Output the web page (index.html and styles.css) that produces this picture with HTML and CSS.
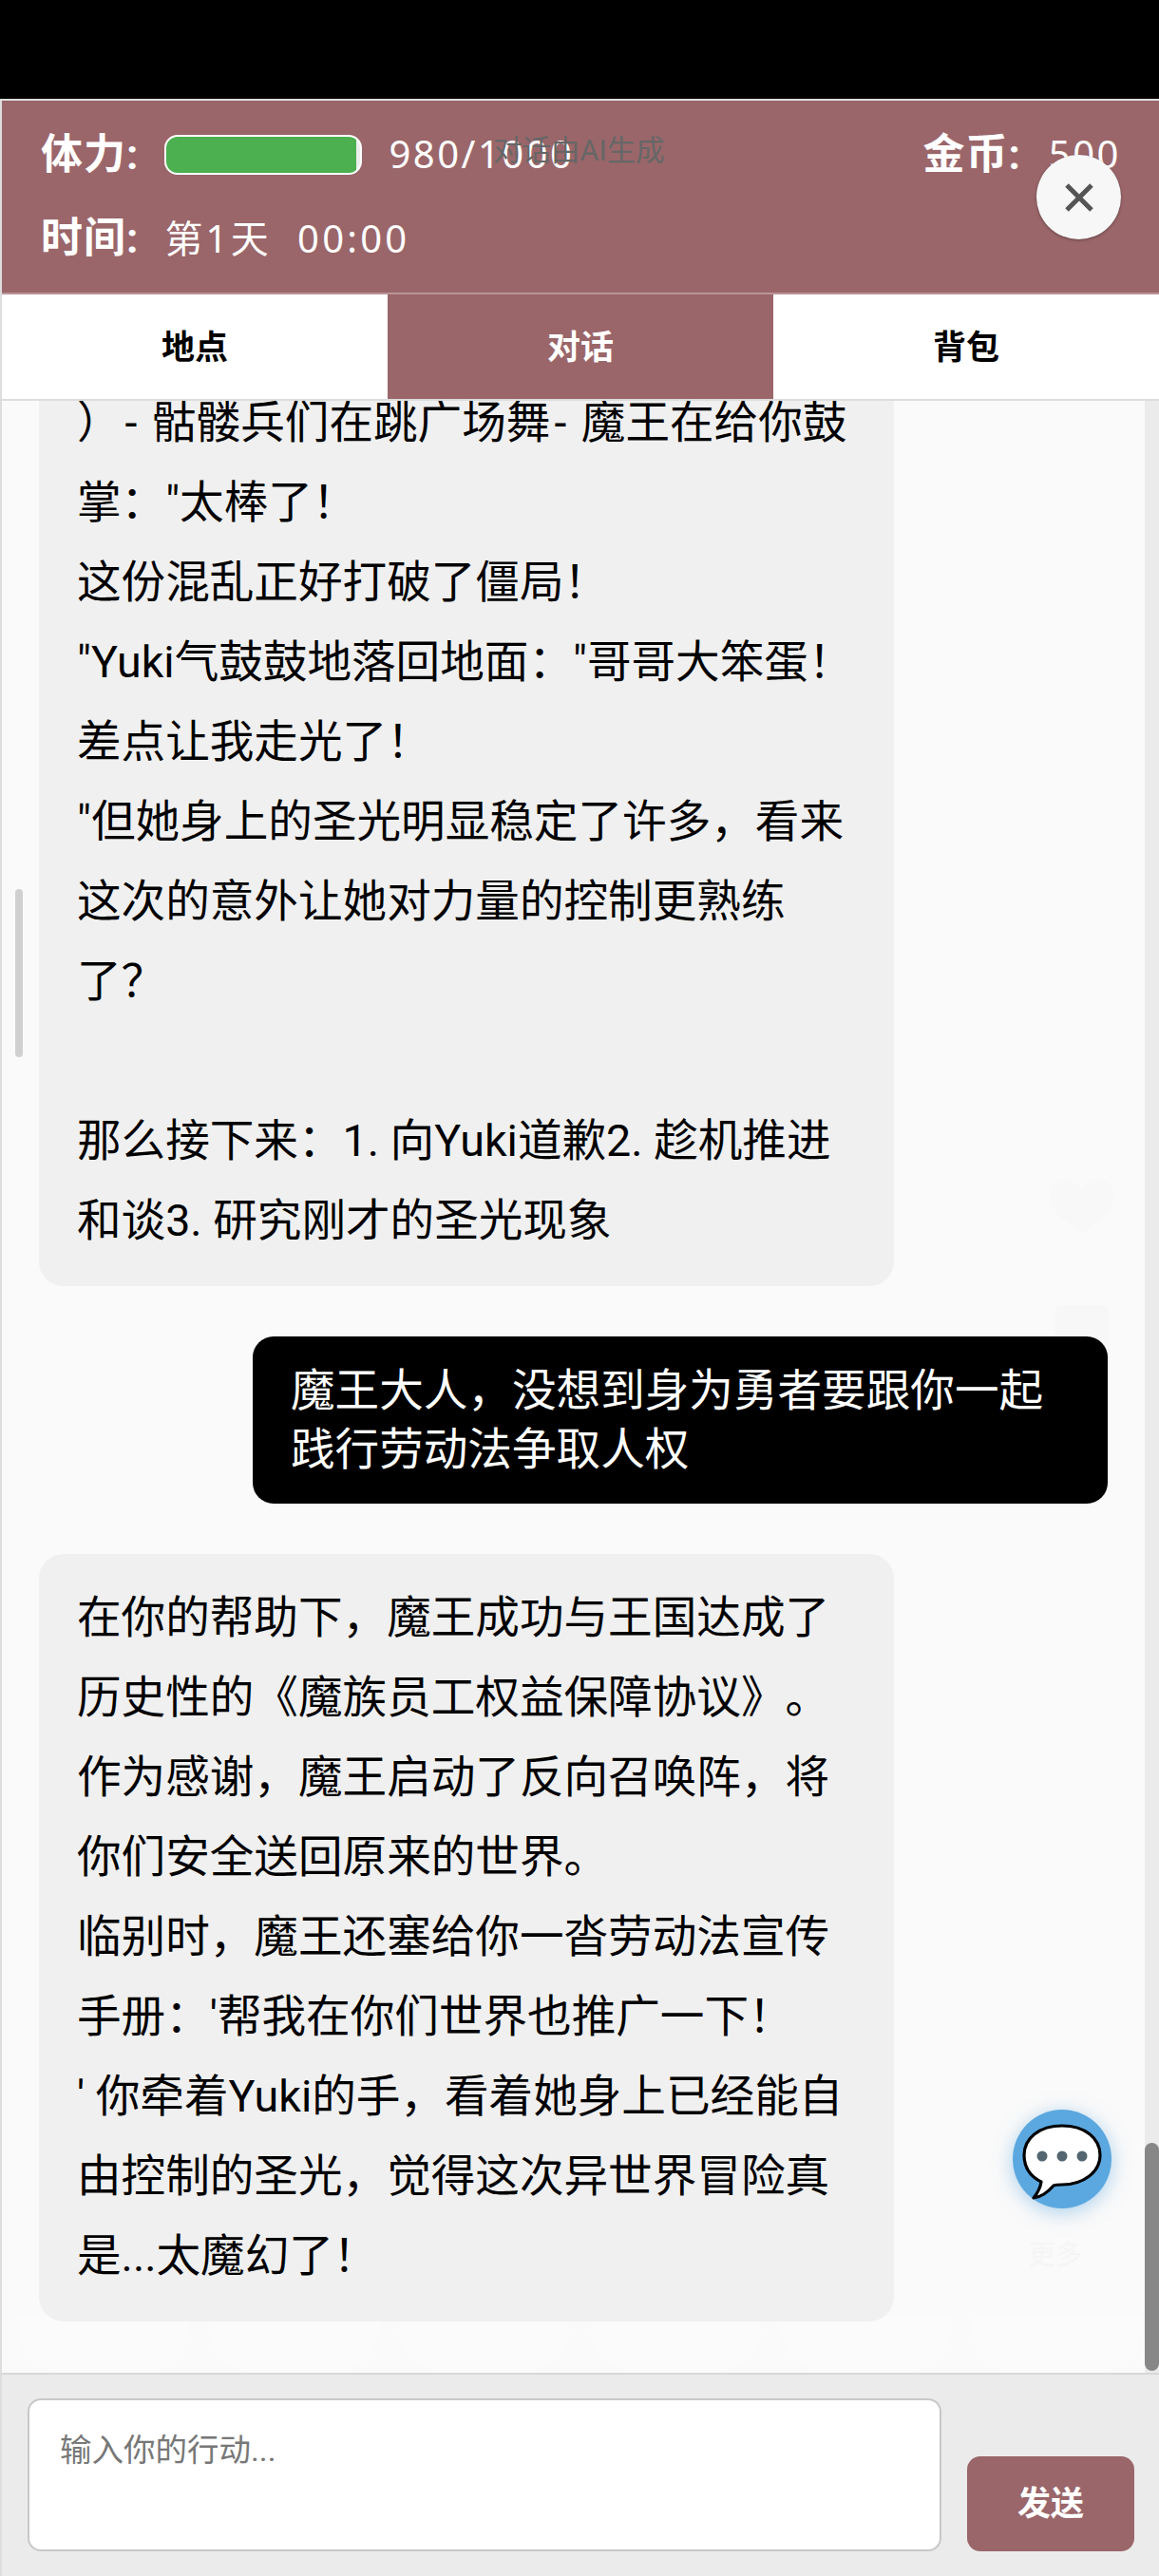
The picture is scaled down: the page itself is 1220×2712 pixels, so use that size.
FILE: index.html
```html
<!DOCTYPE html>
<html lang="zh-CN">
<head>
  <meta charset="UTF-8">
  <meta name="viewport" content="width=device-width, initial-scale=1.0">
  <title>对话</title>
  <link rel="stylesheet" href="styles.css">
</head>
<body>
  <div class="app">
    <div class="topbar"></div>

    <div class="panel">
      <header class="status">
        <div class="status-row">
          <div class="stat">
            <span class="stat-label">体力:</span>
            <div class="bar"><div class="bar-fill"></div></div>
            <span class="stat-value">980/1000</span>
          </div>
          <div class="stat">
            <span class="stat-label gold-label">金币:</span>
            <span class="stat-value">500</span>
          </div>
        </div>
        <div class="status-row">
          <div class="stat">
            <span class="stat-label">时间:</span>
            <span class="stat-value time-value">第1天&nbsp; 00:00</span>
          </div>
        </div>
      </header>

      <nav class="tabs">
        <button class="tab">地点</button>
        <button class="tab active">对话</button>
        <button class="tab">背包</button>
      </nav>

      <main class="chat">
        <!-- 背景水印 -->
        <div class="watermark">
          <svg class="wm-heart" viewBox="0 0 72 60"><path d="M36 58C20 46 2 34 2 17 2 7 10 1 19 1c7 0 13 4 17 10C40 5 46 1 53 1c9 0 17 6 17 16 0 17-18 29-34 41z"/></svg>
          <div class="wm-box"></div>
          <span class="wm-more">更多</span>
          <div class="wm-pills">
            <div></div><div></div><div></div><div></div><div></div><div></div>
          </div>
        </div>

        <div class="msg bot">）<span class="dash">-</span> 骷髅兵们在跳广场舞<span class="dash">-</span> 魔王在给你鼓掌："太棒了！<br>这份混乱正好打破了僵局！<br>"Yuki气鼓鼓地落回地面："哥哥大笨蛋！<br>差点让我走光了！<br>"但她身上的圣光明显稳定了许多，看来这次的意外让她对力量的控制更熟练了？<br><br>那么接下来：1. 向Yuki道歉2. 趁机推进和谈3. 研究刚才的圣光现象</div>

        <div class="msg user">魔王大人，没想到身为勇者要跟你一起践行劳动法争取人权</div>

        <div class="msg bot">在你的帮助下，魔王成功与王国达成了历史性的《魔族员工权益保障协议》。<br>作为感谢，魔王启动了反向召唤阵，将你们安全送回原来的世界。<br>临别时，魔王还塞给你一沓劳动法宣传手册：'帮我在你们世界也推广一下！<br>' 你牵着Yuki的手，看着她身上已经能自由控制的圣光，觉得这次异世界冒险真是...太魔幻了！</div>
      </main>

      <footer class="composer">
        <div class="input">输入你的行动...</div>
        <button class="send">发送</button>
      </footer>
    </div>

    <!-- 浮层 -->
    <div class="ai-note">对话由AI生成</div>
    <button class="close">
      <svg viewBox="0 0 30 30" width="30" height="30"><path d="M2 2l26 26M28 2L2 28"/></svg>
    </button>
    <div class="scroll-left"></div>
    <div class="scroll-right"></div>
    <button class="fab">
      <svg viewBox="0 0 104 104" width="104" height="104">
        <path class="fab-bubble" d="M52 17C76 17 92 30 92 48 92 66 74 79 52 79 48 79 45 79 43 80 37 87 30 92 22 93 26 88 29 83 30 76 18 70 12 60 12 48 12 30 28 17 52 17Z"/>
        <circle cx="31" cy="49" r="5.5"/>
        <circle cx="52" cy="49" r="5.5"/>
        <circle cx="73" cy="49" r="5.5"/>
      </svg>
    </button>
  </div>
</body>
</html>
```

FILE: styles.css
```css
/* 全局 */
* {
  box-sizing: border-box;
}

body {
  margin: 0;
  font-family: Roboto, "Noto Sans CJK SC", sans-serif;
  text-spacing-trim: space-all;
  background-color: #fafafa;
  color: #000;
}

button {
  font-family: inherit;
  border: none;
  padding: 0;
}

.app {
  position: relative;
  width: 1220px;
  height: 2712px;
  overflow: hidden;
  display: flex;
  flex-direction: column;
}

.topbar {
  height: 104px;
  background-color: #000;
}

.panel {
  flex: 1;
  min-height: 0;
  display: flex;
  flex-direction: column;
  border-top: 2px solid #ddd;
  border-left: 2px solid #ddd;
}

/* 状态栏 */
.status {
  height: 204px;
  padding: 27px 40px 0 41px;
  background-color: #9a666a;
  border-bottom: 2px solid #b99497;
  color: #fff;
  display: flex;
  flex-direction: column;
  gap: 28px;
}

.status-row {
  height: 60px;
  display: flex;
  justify-content: space-between;
  align-items: center;
}

.stat {
  display: flex;
  align-items: center;
}

.stat-label {
  font-size: 44px;
  font-weight: 700;
  letter-spacing: 1px;
  margin-right: 27px;
  padding-bottom: 8px;
}

.gold-label {
  margin-right: 29px;
}

.stat-value {
  font-family: "Noto Sans", "Noto Sans CJK SC", sans-serif;
  font-size: 40px;
  letter-spacing: 2.5px;
  padding-bottom: 4px;
}

.time-value {
  letter-spacing: 3.2px;
}

.bar {
  width: 208px;
  height: 42px;
  border: 2px solid #fff;
  border-radius: 14px;
  overflow: hidden;
  background-color: #eee;
  margin-right: 28px;
}

.bar-fill {
  width: 98%;
  height: 100%;
  background-color: #4caf50;
}

/* 标签 */
.tabs {
  height: 112px;
  display: grid;
  grid-template-columns: repeat(3, 1fr);
  border-bottom: 2px solid #ddd;
  background-color: #fff;
}

.tab {
  font-size: 35px;
  font-weight: 700;
  color: #000;
  background-color: #fff;
  padding-bottom: 6px;
}

.tab.active {
  color: #fff;
  background-color: #9a666a;
}

/* 对话 */
.chat {
  position: relative;
  flex: 1;
  min-height: 0;
  overflow: hidden;
  display: flex;
  flex-direction: column;
  justify-content: flex-end;
  align-items: flex-start;
  gap: 53px;
  padding: 0 54px 54px 39px;
  background-color: #fafafa;
}

.msg {
  position: relative;
  font-size: 46.6px;
  flex-shrink: 0;
}

.msg.bot {
  width: 900px;
  padding: 25px 40px 27px;
  line-height: 84px;
  border-radius: 26px;
  background-color: #f0f0f0;
}

.msg.user {
  align-self: flex-end;
  width: 900px;
  padding: 26px 40px 26px;
  line-height: 62px;
  border-radius: 22px;
  background-color: #000;
  color: #fff;
}

.dash {
  margin: 0 4px;
}

.watermark {
  position: absolute;
  inset: 0;
}

.wm-heart {
  position: absolute;
  left: 1101px;
  top: 819px;
  width: 72px;
  height: 60px;
  fill: #f8f8f8;
}

.wm-box {
  position: absolute;
  left: 1108px;
  top: 952px;
  width: 58px;
  height: 80px;
  border-radius: 8px;
  background-color: #f7f7f7;
}

.wm-more {
  position: absolute;
  left: 1081px;
  top: 1930px;
  font-size: 28px;
  color: #f5f5f5;
}

.wm-pills {
  position: absolute;
  left: 17px;
  right: 18px;
  bottom: 0;
  height: 60px;
  display: flex;
  gap: 21px;
}

.wm-pills div {
  flex: 1;
  border-radius: 0 0 50px 50px;
  background-color: #fbfbfb;
}

/* 输入区 */
.composer {
  height: 214px;
  padding: 26px 26px 26px 27px;
  display: flex;
  align-items: flex-end;
  gap: 27px;
  background-color: #ebebeb;
  border-top: 2px solid #d8d8d8;
}

.input {
  width: 962px;
  height: 161px;
  padding: 31px 32px;
  font-size: 33.5px;
  line-height: 44px;
  color: #777;
  background-color: #fff;
  border: 2px solid #c8c8c8;
  border-radius: 14px;
}

.send {
  width: 176px;
  height: 100px;
  font-size: 35px;
  font-weight: 700;
  color: #fff;
  background-color: #9a666a;
  border-radius: 14px;
  padding-bottom: 8px;
}

/* 浮层 */
.ai-note {
  position: absolute;
  left: 519px;
  top: 139px;
  font-size: 30.5px;
  line-height: 40px;
  color: #666;
}

.close {
  position: absolute;
  left: 1091px;
  top: 163px;
  width: 89px;
  height: 89px;
  border-radius: 50%;
  background-color: #f7f7f7;
  box-shadow: 0 1px 3px rgba(0, 0, 0, 0.35);
  display: flex;
  align-items: center;
  justify-content: center;
}

.close path {
  fill: none;
  stroke: #555;
  stroke-width: 5;
}

.scroll-left {
  position: absolute;
  left: 16px;
  top: 936px;
  width: 8px;
  height: 177px;
  border-radius: 4px;
  background-color: #d0d0d0;
}

.scroll-right {
  position: absolute;
  left: 1205px;
  top: 2256px;
  width: 15px;
  height: 240px;
  border-radius: 8px;
  background-color: #878787;
}

.chat::after {
  content: "";
  position: absolute;
  top: 0;
  right: 0;
  bottom: 0;
  width: 15px;
  background-color: #ebebeb;
}

.fab {
  position: absolute;
  left: 1066px;
  top: 2221px;
  width: 104px;
  height: 104px;
  border-radius: 50%;
  background-color: #5ba8e0;
  box-shadow: 0 4px 20px rgba(91, 168, 224, 0.5);
}

.fab svg {
  display: block;
  fill: #546670;
}

.fab .fab-bubble {
  fill: #fff;
  stroke: #000;
  stroke-width: 3.2;
  stroke-linejoin: round;
}
```
